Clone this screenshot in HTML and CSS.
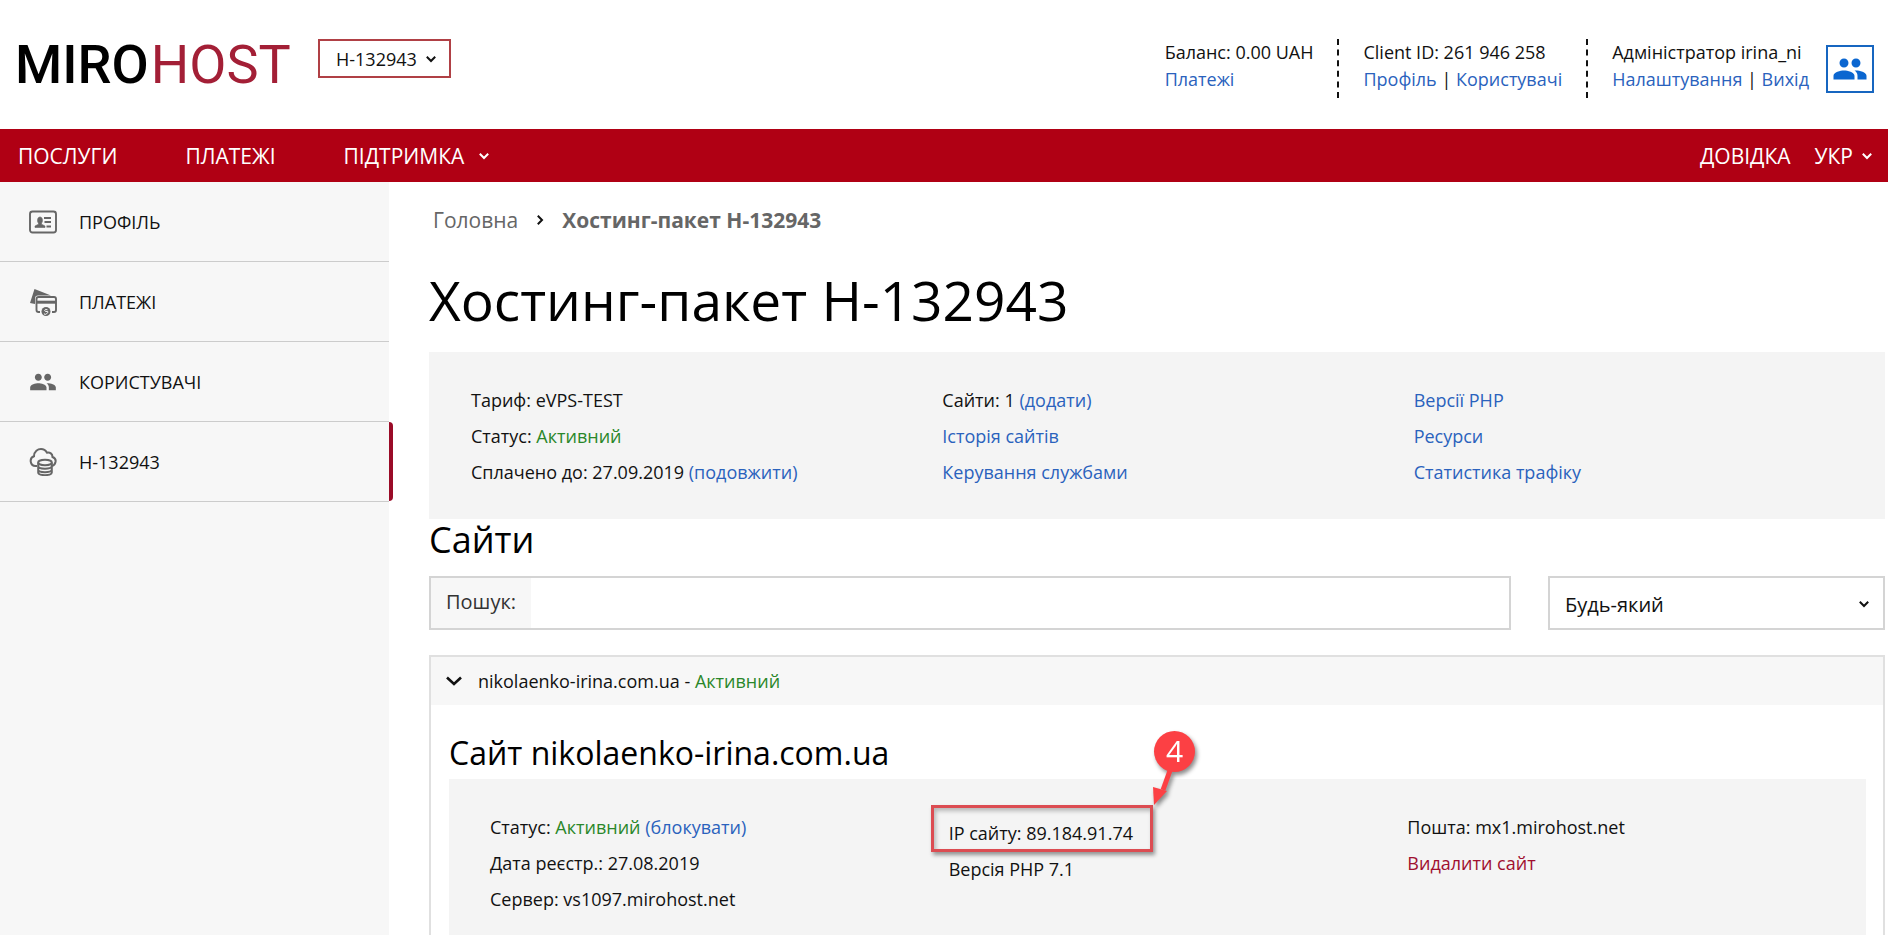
FILE: index.html
```html
<!DOCTYPE html>
<html lang="uk">
<head>
<meta charset="utf-8">
<title>Хостинг-пакет H-132943</title>
<link rel="stylesheet" href="styles.css">
</head>
<body>
<svg class="sprite" aria-hidden="true">
  <symbol id="chevron" viewBox="0 0 12 12"><path d="M1.8 3.8 6 8l4.200-4.200" fill="none" stroke="currentColor" stroke-width="2"/></symbol>
  <symbol id="chevron-wide" viewBox="0 0 18 18"><path d="M2 5.500 9 12l7-6.500" fill="none" stroke="currentColor" stroke-width="2.600"/></symbol>
  <symbol id="people" viewBox="0 0 24 24"><path fill="currentColor" d="M16 11c1.660 0 2.990-1.340 2.990-3S17.660 5 16 5s-3 1.340-3 3 1.340 3 3 3zm-8 0c1.660 0 2.990-1.340 2.990-3S9.660 5 8 5 5 6.340 5 8s1.340 3 3 3zm0 2c-2.330 0-7 1.170-7 3.500V19h14v-2.500c0-2.330-4.670-3.500-7-3.500zm8 0c-.290 0-.620.020-.970.050 1.160.840 1.970 1.970 1.970 3.450V19h6v-2.500c0-2.330-4.670-3.500-7-3.500z"/></symbol>
</svg>

<header class="header">
  <a class="logo" href="#"><span class="logo-miro">MIRO</span><span class="logo-host">HOST</span></a>
  <button class="package" type="button">H-132943 <svg class="chev"><use href="#chevron"/></svg></button>
  <div class="account">
    <div class="account-col"><span>Баланс: 0.00 UAH</span><span><a href="#">Платежі</a></span></div>
    <div class="account-col"><span>Client ID: 261 946 258</span><span><a href="#">Профіль</a> | <a href="#">Користувачі</a></span></div>
    <div class="account-col"><span>Адміністратор irina_ni</span><span><a href="#">Налаштування</a> | <a href="#">Вихід</a></span></div>
  </div>
  <button class="people-btn" type="button" aria-label="Користувачі"><svg><use href="#people"/></svg></button>
</header>

<nav class="nav">
  <a href="#">ПОСЛУГИ</a>
  <a href="#">ПЛАТЕЖІ</a>
  <a href="#">ПІДТРИМКА <svg class="chev chev-wide"><use href="#chevron"/></svg></a>
  <div class="nav-right">
    <a href="#">ДОВІДКА</a>
    <a href="#">УКР <svg class="chev"><use href="#chevron"/></svg></a>
  </div>
</nav>

<div class="layout">
  <aside class="sidebar">
    <a class="side-item" href="#">
      <svg viewBox="0 0 28 28" fill="none" stroke="currentColor"><rect x="1" y="3.500" width="26" height="21" rx="2.500" stroke-width="1.900"/><path d="M6 19.500v-1.500l3.500-1.800v-1.200c-1.500-1-1.500-6 1.500-6s3 5 1.500 6v1.200l3.500 1.800v1.500z" fill="currentColor" stroke="currentColor" stroke-width=".6"/><path d="M15 10h7M15.500 14h6.500M17.500 18.500h4.500" stroke-width="2"/></svg>
      ПРОФІЛЬ</a>
    <a class="side-item" href="#">
      <svg viewBox="0 0 28 28" fill="none" stroke="currentColor"><path d="M1 15 5.500 1 22 7.500H9q-3 0-3 3V16z" fill="currentColor" stroke="none"/><path d="M11 24H9.500q-2 0-2-2V11q0-2 2-2h15.500q2 0 2 2v11q0 2-2 2H23" stroke-width="1.900"/><path d="M7.500 14.200h19.500" stroke-width="3"/><circle cx="17" cy="23.500" r="4.500" fill="currentColor" stroke="none"/><path d="M18.500 21.800q-2.800-1-2.800.5t2.400 1.300-.3 1.900-2.400 0" stroke="#f7f7f7" stroke-width="1"/></svg>
      ПЛАТЕЖІ</a>
    <a class="side-item" href="#">
      <svg><use href="#people"/></svg>
      КОРИСТУВАЧІ</a>
    <a class="side-item side-active" href="#">
      <svg viewBox="0 0 28 28" fill="none" stroke="currentColor" stroke-width="2"><path d="M8 18H6.500a5 5 0 0 1-1.500-9.700C5 3 9 1 12 1s5 2 6 3.700c3-.5 5.500 1 5.500 4.300 2.500 1 3.500 3 3 5-.5 2.500-2 3.500-3.500 4"/><ellipse cx="16" cy="14.500" rx="6.800" ry="2.700"/><path d="M9.200 14.500v10c0 3.500 13.600 3.500 13.600 0v-10M9.200 18c0 3.500 13.600 3.500 13.600 0M9.200 21.500c0 3.500 13.600 3.500 13.600 0"/></svg>
      H-132943</a>
  </aside>

  <main class="main">
    <div class="crumbs"><a href="#">Головна</a><svg class="chev chev-right"><use href="#chevron"/></svg><strong>Хостинг-пакет H-132943</strong></div>
    <h1>Хостинг-пакет H-132943</h1>

    <section class="info">
      <ul>
        <li>Тариф: eVPS-TEST</li>
        <li>Статус: <span class="ok">Активний</span></li>
        <li>Сплачено до: 27.09.2019 <a href="#">(подовжити)</a></li>
      </ul>
      <ul>
        <li>Сайти: 1 <a href="#">(додати)</a></li>
        <li><a href="#">Історія сайтів</a></li>
        <li><a href="#">Керування службами</a></li>
      </ul>
      <ul>
        <li><a href="#">Версії PHP</a></li>
        <li><a href="#">Ресурси</a></li>
        <li><a href="#">Статистика трафіку</a></li>
      </ul>
    </section>

    <h2>Сайти</h2>
    <form class="filters">
      <div class="search"><label for="q">Пошук:</label><input id="q" type="text"></div>
      <div class="state">
        <select aria-label="Статус сайту"><option>Будь-який</option></select>
        <svg class="chev"><use href="#chevron"/></svg>
      </div>
    </form>

    <section class="panel">
      <button class="panel-head" type="button"><svg class="chev-big"><use href="#chevron-wide"/></svg><span>nikolaenko-irina.com.ua - <span class="ok">Активний</span></span></button>
      <div class="panel-body">
        <h3>Сайт nikolaenko-irina.com.ua</h3>
        <div class="info">
          <ul>
            <li>Статус: <span class="ok">Активний</span> <a href="#">(блокувати)</a></li>
            <li>Дата реєстр.: 27.08.2019</li>
            <li>Сервер: vs1097.mirohost.net</li>
          </ul>
          <ul class="ip-col">
            <li><span class="marked">IP сайту: 89.184.91.74<span class="frame"></span>
              <span class="callout"><svg class="arrow" viewBox="0 0 30 44"><path d="M19 0 10 25" stroke="#fc4044" stroke-width="5"/><path d="M1 40 0 22l14 4z" fill="#fc4044"/></svg><span class="badge">4</span></span></span></li>
            <li>Версія PHP 7.1</li>
          </ul>
          <ul>
            <li>Пошта: mx1.mirohost.net</li>
            <li><a class="danger" href="#">Видалити сайт</a></li>
          </ul>
        </div>
      </div>
    </section>
  </main>
</div>
</body>
</html>
```

FILE: styles.css
```css
* { box-sizing: border-box; }

body {
  margin: 0;
  height: 100vh;
  display: flex;
  flex-direction: column;
  overflow: hidden;
  font: 18px/36px "Open Sans", "Noto Sans", sans-serif;
  color: #111;
  background: #fff;
}

a { color: #2a62bd; text-decoration: none; }
button, input, select { font: inherit; color: inherit; }
ul { list-style: none; margin: 0; padding: 0; }
h1, h2, h3 { margin: 0; font-weight: 400; color: #000; }
.sprite { display: none; }
.chev { width: 12px; height: 12px; flex: none; }
.ok { color: #2a872a; }

/* Header */
.header {
  flex: none;
  display: flex;
  align-items: flex-start;
  height: 129px;
  padding: 39px 14px 0 15px;
}
.logo {
  display: flex;
  gap: 2px;
  width: 303px;
  font: 54px/52px Roboto, sans-serif;
}
.logo-miro { color: #000; font-weight: 500; }
.logo-host { color: #a31f36; }
.package {
  display: flex;
  align-items: center;
  gap: 8px;
  height: 39px;
  padding: 0 12px 0 16px;
  border: 2px solid #b04045;
  background: #fff;
}
.account { display: flex; margin-left: auto; }
.account-col {
  display: flex;
  flex-direction: column;
  height: 59px;
  padding-right: 24px;
  line-height: 27px;
  white-space: nowrap;
}
.account-col + .account-col {
  padding-left: 24px;
  border-left: 2px dashed #111;
}
.account-col:last-child { padding-right: 17px; }
.people-btn {
  display: flex;
  align-items: center;
  justify-content: center;
  width: 48px;
  height: 48px;
  margin-top: 6px;
  padding: 0;
  border: 2px solid #1766c0;
  background: #fff;
  color: #0b66d0;
}
.people-btn svg { width: 36px; height: 36px; }

/* Red navigation bar */
.nav {
  flex: none;
  display: flex;
  align-items: center;
  gap: 68px;
  height: 53px;
  padding: 0 15px 0 18px;
  background: #b00014;
  font-size: 21px;
}
.nav a { display: flex; align-items: center; color: #fff; }
.nav .chev { margin-left: 8px; }
.nav .chev-wide { margin-left: 14px; }
.nav-right { display: flex; gap: 24px; margin-left: auto; }

/* Sidebar */
.layout { flex: 1; display: flex; min-height: 0; }
.sidebar { flex: none; width: 389px; background: #f7f7f7; }
.side-item {
  position: relative;
  display: flex;
  align-items: center;
  gap: 22px;
  height: 80px;
  padding-left: 29px;
  border-bottom: 1px solid #ccc;
  color: #111;
}
.side-item svg { width: 28px; height: 28px; color: #666; }
.side-active::after {
  content: "";
  position: absolute;
  top: 0;
  bottom: 0;
  left: 100%;
  width: 4px;
  border-radius: 0 4px 4px 0;
  background: #9a0b27;
}

/* Content */
.main {
  flex: 1;
  min-width: 0;
  padding: 20px 3px 20px 40px;
  overflow-y: auto;
  scrollbar-width: none;
}
.crumbs {
  display: flex;
  align-items: center;
  padding-left: 4px;
  font-size: 21px;
}
.crumbs, .crumbs a { color: #666; }
.chev-right { margin: 0 16px; color: #111; transform: rotate(-90deg); }
h1 { padding: 12px 0 2px; font-size: 55px; line-height: 100px; }
.info {
  display: grid;
  grid-template-columns: repeat(3, 1fr);
  padding: 30px 0 29px 42px;
  background: #f4f4f4;
}
h2 { margin-bottom: 15px; font-size: 36px; line-height: 42px; }

.filters { display: flex; gap: 37px; margin-bottom: 25px; }
.search {
  flex: 1;
  display: flex;
  height: 54px;
  border: 2px solid #d4d4d4;
}
.search label {
  padding: 6px 15px;
  background: #f7f7f7;
  font-size: 20px;
  color: #333;
}
.search input { flex: 1; min-width: 0; border: 0; outline: 0; background: #fff; }
.state { position: relative; width: 337px; }
.state select {
  appearance: none;
  width: 100%;
  height: 54px;
  padding: 4px 15px 0;
  border: 2px solid #d4d4d4;
  border-radius: 0;
  background: #fff;
  font-size: 20px;
}
.state .chev { position: absolute; top: 22px; right: 15px; }

.panel { border: 2px solid #e0e0e0; }
.panel-head {
  display: flex;
  align-items: center;
  gap: 15px;
  width: 100%;
  height: 48px;
  padding: 0 14px 1px;
  border: 0;
  background: #f7f7f7;
}
.chev-big { width: 18px; height: 18px; }
.panel-body { padding: 24px 17px 20px 18px; }
h3 { margin-bottom: 2px; font-size: 32px; line-height: 48px; }
.panel .info { padding: 30px 0 29px 41px; }
.ip-col { padding-top: 6px; }
.danger { color: #a00f2f; }

/* Annotation over the IP address */
.marked { position: relative; display: inline-block; }
.frame {
  position: absolute;
  inset: -10px -20px -1px -18px;
  border: 3px solid #dc4c52;
  box-shadow: 2px 3px 4px rgba(0, 0, 0, .4), inset 2px 3px 4px rgba(0, 0, 0, .25);
}
.callout {
  position: absolute;
  right: -62px;
  bottom: 79px;
  filter: drop-shadow(2px 3px 2px rgba(0, 0, 0, .45));
}
.badge {
  position: relative;
  display: block;
  width: 41px;
  height: 41px;
  border-radius: 50%;
  background: #fc4044;
  color: #fff;
  font-size: 30px;
  line-height: 40px;
  text-align: center;
}
.arrow { position: absolute; top: 34px; left: -1px; width: 30px; height: 44px; }
```
